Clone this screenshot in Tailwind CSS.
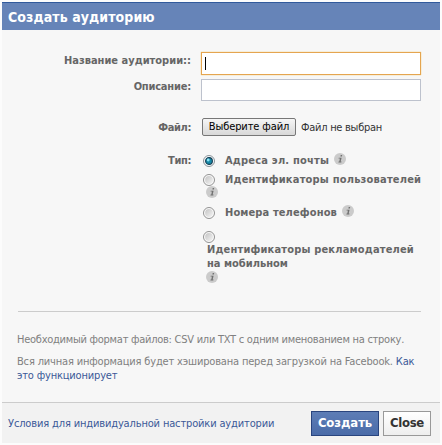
<!DOCTYPE html>
<html lang="ru">
<head>
<meta charset="utf-8">
<title>Создать аудиторию</title>
<script src="https://cdn.jsdelivr.net/npm/@tailwindcss/browser@4"></script>
</head>
<body class="bg-[#fcfcfc] w-[442px] h-[445px] overflow-hidden pl-[2px] pt-[2px] font-['DejaVu_Sans_Condensed','DejaVu_Sans',sans-serif] text-[11px] leading-[14px] text-[#666]">
<svg class="absolute size-0">
  <defs><linearGradient id="shade" x1="0" y1="0" x2="1" y2="1"><stop offset="0" stop-color="#c4c4c4"/><stop offset="1" stop-color="#f4f4f4"/></linearGradient></defs>
  <symbol id="info" viewBox="0 0 12 12"><circle cx="6" cy="6" r="6" fill="#cbcbcb"/><path d="M6.7 2.1h1.5L7.9 3.6H6.4zM4.7 4.7h2.9L6.7 8.6h.8L7.3 9.5H4.4l.2-.9h.7l.6-3H4.5z" fill="#707070"/></symbol>
  <symbol id="radio" viewBox="0 0 12 12"><circle cx="6" cy="6" r="5.5" fill="#fafafa" stroke="#929292"/><circle cx="6" cy="6" r="3.9" fill="url(#shade)"/></symbol>
  <symbol id="radio-on" viewBox="0 0 12 12"><circle cx="6" cy="6" r="5.5" fill="#f4f8fa" stroke="#8a9298"/><circle cx="6" cy="6" r="3.4" fill="#1789a8" stroke="#173c50" stroke-width="1.1"/><circle cx="5.2" cy="5" r="1.4" fill="#8ce4f4"/></symbol>
</svg>
<main class="w-[438px] h-[441px] flex flex-col bg-[#f7f7f7]">
  <header class="h-[28px] shrink-0 border-t border-[#315a9c] bg-[#6684b8] pl-[6px] flex items-center text-white font-bold text-[14px] tracking-[0.08px] whitespace-nowrap"><span>Создать аудиторию</span></header>
  <form class="flex flex-col whitespace-nowrap">
    <div class="flex pt-[22px]">
      <label class="w-[189px] pt-[2px] text-right font-bold">Название аудитории::</label>
      <div class="ml-[10px] w-[220px] h-[23px] border border-[#e5a550] shadow-[0_0_1px_#f0c050] bg-white pl-[3px] pt-[4px]"><div class="w-px h-[13px] bg-black"></div></div>
    </div>
    <div class="flex pt-[4px]">
      <label class="w-[189px] text-right font-bold tracking-[-0.2px] pt-px">Описание:</label>
      <div class="ml-[10px] w-[220px] h-[22px] border border-[#bdc2cd] bg-white"></div>
    </div>
    <div class="flex pt-[17px] items-center">
      <label class="w-[189px] pt-px text-right font-bold tracking-[-0.4px]">Файл:</label>
      <button type="button" class="ml-[11px] w-[94px] h-[18px] rounded-[2px] border border-[#777] bg-linear-to-b from-[#f6f6f6] to-[#d8d8d8] text-black leading-[16px] tracking-[-0.1px]"><span>Выберите файл</span></button>
      <span class="ml-[5px] pt-px text-[#333] tracking-[-0.27px]">Файл не выбран</span>
    </div>
    <div class="flex pt-[17px]">
      <label class="w-[189px] pt-px text-right font-bold tracking-[-0.4px]">Тип:</label>
      <div class="ml-[12px] flex flex-col font-bold">
        <div class="flex h-[19px]"><svg class="size-[12px] mt-[2px]"><use href="#radio-on"/></svg><span class="ml-[10px] pt-px tracking-[0.2px]">Адреса эл. почты</span><svg class="size-[12px] ml-[5px]"><use href="#info"/></svg></div>
        <div class="flex h-[14px]"><svg class="size-[12px] mt-[2px]"><use href="#radio"/></svg><span class="ml-[10px] pt-px tracking-[0.2px]">Идентификаторы пользователей</span></div>
        <svg class="size-[12px] ml-[3px]"><use href="#info"/></svg>
        <div class="flex mt-[7px] h-[26px]"><svg class="size-[12px] mt-[2px]"><use href="#radio"/></svg><span class="ml-[10px] pt-px tracking-[0.12px]">Номера телефонов</span><svg class="size-[12px] ml-[5px]"><use href="#info"/></svg></div>
        <svg class="size-[12px]"><use href="#radio"/></svg>
        <span class="ml-[4px] tracking-[0.17px]">Идентификаторы рекламодателей</span>
        <span class="ml-[4px]">на мобильном</span>
        <svg class="size-[12px] ml-[3px]"><use href="#info"/></svg>
      </div>
    </div>
  </form>
  <section class="mt-[28px] mx-[16px] w-[403px] border-t border-[#ccc] pt-[21px] text-[#808080] whitespace-nowrap">
    <p class="-ml-px tracking-[-0.26px]"><span>Необходимый формат файлов: CSV или TXT с одним именованием на строку.</span></p>
    <p class="-ml-px mt-[8px] tracking-[-0.17px]"><span>Вся личная информация будет хэширована перед загрузкой на Facebook.</span> <a class="text-[#3b5998]">Как</a><br><a class="text-[#3b5998]">это функционирует</a></p>
  </section>
  <footer class="mt-auto h-[41px] shrink-0 border-t border-[#ccc] bg-[#f2f2f2] flex items-center pl-[6px] pr-[9px] whitespace-nowrap">
    <a class="text-[#3b5998] tracking-[-0.15px] pt-px">Условия для индивидуальной настройки аудитории</a>
    <button class="ml-auto w-[68px] h-[25px] border border-[#29447e] bg-linear-to-b from-[#5d7db6] to-[#4a6ba8] text-white font-bold text-[13px] tracking-[-0.1px]"><span>Создать</span></button>
    <button class="ml-[4px] w-[48px] h-[25px] border border-[#999] bg-linear-to-b from-white to-[#eee] text-[#333] font-bold text-[13px] tracking-[-0.3px]"><span>Close</span></button>
  </footer>
</main>
</body>
</html>
